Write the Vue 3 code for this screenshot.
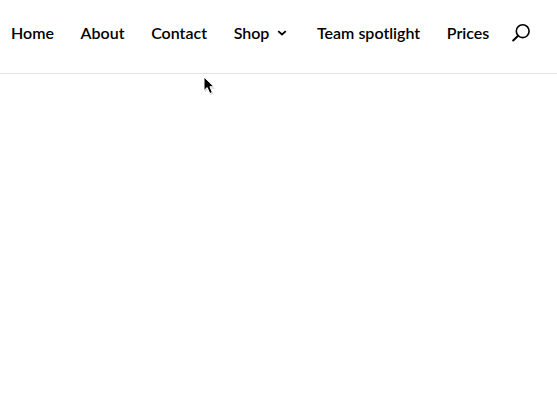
<script setup>
import { ref } from 'vue'

const links = [
  { text: 'Home' },
  { text: 'About' },
  { text: 'Contact' },
  { text: 'Shop', sub: true },
  { text: 'Team spotlight' },
  { text: 'Prices' }
]
const current = ref('')
</script>

<template>
  <div class="page">
    <header class="header">
      <nav class="nav">
        <a
          v-for="item in links"
          :key="item.text"
          class="link"
          :class="{ current: current === item.text }"
          href="#"
          @click.prevent="current = item.text"
        >
          {{ item.text }}
          <svg v-if="item.sub" class="arrow" width="10" height="6" viewBox="0 0 10 6">
            <path d="M1.2 1.1 L5 4.5 L8.8 1.1" />
          </svg>
        </a>
        <button class="search" type="button" aria-label="Search">
          <svg width="18" height="18" viewBox="0 0 18 18">
            <circle cx="10.7" cy="7.2" r="6.4" />
            <path class="handle" d="M6.1 11.7 L1.2 16.5" />
          </svg>
        </button>
      </nav>
    </header>
    <svg class="mouse" width="14" height="20" viewBox="0 0 14 20">
      <path class="shadow" d="M2 3 V16.5 L5 13.6 L7.8 19 L10.4 17.8 L8 12.7 H12 Z" />
      <path class="body" d="M1 1 V14.5 L4.2 11.6 L6.8 17.6 L9.4 16.4 L6.9 10.7 H11 Z" />
    </svg>
  </div>
</template>

<style>
body {
  margin: 0;
  background: #fff;
}
</style>

<style scoped>
.page {
  position: relative;
  min-height: 100vh;
}
.header {
  border-bottom: 1px solid #e2e2e2;
  font-family: Lato, "Liberation Sans", sans-serif;
}
.nav {
  display: flex;
  align-items: center;
  justify-content: space-between;
  padding: 23px 27px 30px 11px;
}
.link {
  display: flex;
  align-items: center;
  gap: 8px;
  color: #000;
  font-size: 16px;
  font-weight: 600;
  line-height: 20px;
  white-space: nowrap;
  text-decoration: none;
}
.link.current {
  color: #555;
}
.arrow {
  margin-right: 3px;
  fill: none;
  stroke: #000;
  stroke-width: 1.8;
}
.search {
  display: flex;
  margin-left: -4px;
  padding: 0;
  border: 0;
  background: none;
  cursor: pointer;
}
.search svg {
  fill: none;
  stroke: #000;
  stroke-width: 1.6;
}
.search .handle {
  stroke-width: 2;
  stroke-linecap: round;
}
.mouse {
  position: absolute;
  top: 76px;
  left: 203px;
  z-index: 1;
}
.shadow {
  fill: #000;
  opacity: 0.15;
}
.body {
  fill: #000;
  stroke: #fff;
  stroke-width: 1;
}
</style>
